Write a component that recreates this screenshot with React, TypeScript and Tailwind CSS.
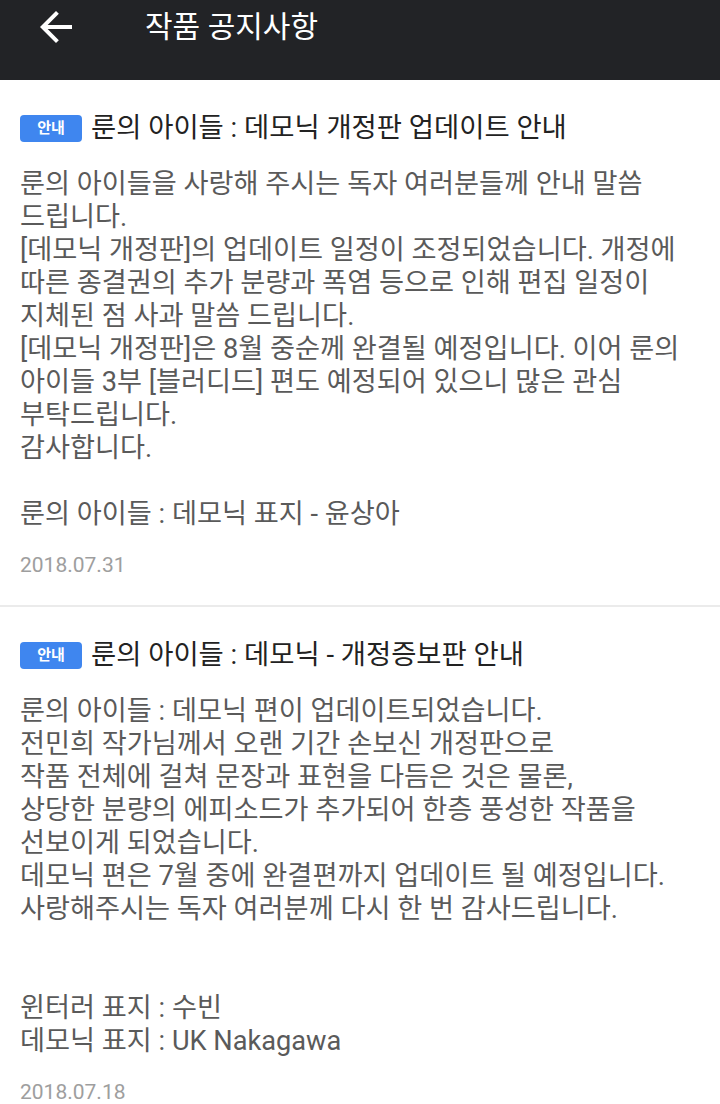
const notices = [
  {
    title: "룬의 아이들 : 데모닉 개정판 업데이트 안내",
    body: `룬의 아이들을 사랑해 주시는 독자 여러분들께 안내 말씀
드립니다.
[데모닉 개정판]의 업데이트 일정이 조정되었습니다. 개정에
따른 종결권의 추가 분량과 폭염 등으로 인해 편집 일정이
지체된 점 사과 말씀 드립니다.
[데모닉 개정판]은 8월 중순께 완결될 예정입니다. 이어 룬의
아이들 3부 [블러디드] 편도 예정되어 있으니 많은 관심
부탁드립니다.
감사합니다.

룬의 아이들 : 데모닉 표지 - 윤상아`,
    date: "2018.07.31",
  },
  {
    title: "룬의 아이들 : 데모닉 - 개정증보판 안내",
    body: `룬의 아이들 : 데모닉 편이 업데이트되었습니다.
전민희 작가님께서 오랜 기간 손보신 개정판으로
작품 전체에 걸쳐 문장과 표현을 다듬은 것은 물론,
상당한 분량의 에피소드가 추가되어 한층 풍성한 작품을
선보이게 되었습니다.
데모닉 편은 7월 중에 완결편까지 업데이트 될 예정입니다.
사랑해주시는 독자 여러분께 다시 한 번 감사드립니다.


윈터러 표지 : 수빈
데모닉 표지 : UK Nakagawa`,
    date: "2018.07.18",
  },
];

function BackArrow() {
  return (
    <svg width="48" height="48" viewBox="0 0 24 24" fill="#ffffff">
      <path d="M20 11H7.83l5.59-5.59L12 4l-8 8 8 8 1.41-1.41L7.83 13H20v-2z" />
    </svg>
  );
}

export default function App() {
  return (
    <div
      className="w-[720px] h-[1104px] overflow-hidden bg-white"
      style={{ fontFamily: 'Roboto, "Noto Sans CJK KR", sans-serif' }}
    >
      <header className="h-[80px] bg-[#222326]">
        <div className="h-[54px] flex items-center">
          <div className="ml-[32px] w-[48px] h-[48px]">
            <BackArrow />
          </div>
          <h1 className="ml-[65px] text-[30px] leading-none text-white">작품 공지사항</h1>
        </div>
      </header>

      {notices.map((n, i) => (
        <section
          key={n.date}
          className={`px-5 pt-[35px] pb-[26px] ${i === 0 ? "border-b-2 border-[#ebebeb]" : ""}`}
        >
          <div className="flex items-center h-[27px]">
            <span className="w-[62px] h-[27px] rounded-[4px] bg-[#3f86ef] text-white text-[15px] font-bold flex items-center justify-center">
              안내
            </span>
            <h2 className="ml-[9px] text-[27.4px] leading-none text-[#222222] whitespace-nowrap">
              {n.title}
            </h2>
          </div>
          <p className="mt-[26px] text-[27.2px] leading-[33px] text-[#5a5a5a] whitespace-pre">
            {n.body}
          </p>
          <p className="mt-[20px] text-[21px] leading-[28px] text-[#9e9e9e]">{n.date}</p>
        </section>
      ))}
    </div>
  );
}
